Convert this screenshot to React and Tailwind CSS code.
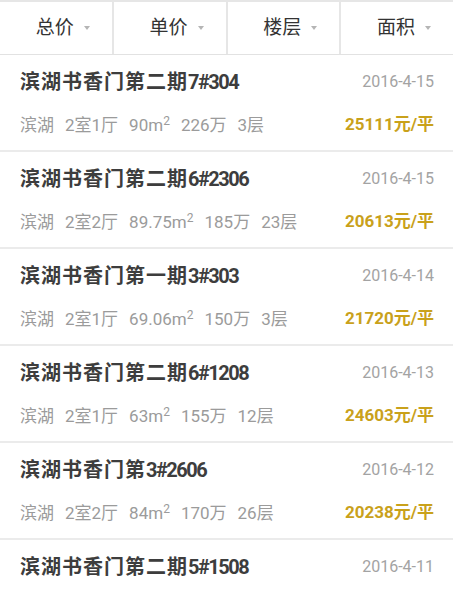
import React from "react";

const tabs = ["总价", "单价", "楼层", "面积"];

const houses = [
  { name: "滨湖书香门第二期", no: "7#304", date: "2016-4-15", area: "滨湖", room: "2室1厅", size: "90", total: "226万", floor: "3层", price: "25111" },
  { name: "滨湖书香门第二期", no: "6#2306", date: "2016-4-15", area: "滨湖", room: "2室2厅", size: "89.75", total: "185万", floor: "23层", price: "20613" },
  { name: "滨湖书香门第一期", no: "3#303", date: "2016-4-14", area: "滨湖", room: "2室1厅", size: "69.06", total: "150万", floor: "3层", price: "21720" },
  { name: "滨湖书香门第二期", no: "6#1208", date: "2016-4-13", area: "滨湖", room: "2室1厅", size: "63", total: "155万", floor: "12层", price: "24603" },
  { name: "滨湖书香门第", no: "3#2606", date: "2016-4-12", area: "滨湖", room: "2室2厅", size: "84", total: "170万", floor: "26层", price: "20238" },
  { name: "滨湖书香门第二期", no: "5#1508", date: "2016-4-11", area: "滨湖", room: "2室1厅", size: "80", total: "160万", floor: "18层", price: "20000" },
];

const App = () => {
  return (
    <div
      className="w-full min-h-screen bg-white"
      style={{ fontFamily: '"Roboto", "Noto Sans CJK SC", sans-serif' }}
    >
      {/* sort tabs */}
      <div className="flex h-[55px] border-t-2 border-b border-t-[#e6e6e6] border-b-[#e2e2e2] bg-white">
        {tabs.map((t, i) => (
          <div
            key={t}
            className={`flex-1 flex items-center justify-center pl-[14px] gap-[10px] ${
              i < 3 ? "border-r-2 border-[#e6e6e6]" : ""
            }`}
          >
            <span className="text-[19px] text-[#333]">{t}</span>
            <span className="w-0 h-0 border-l-[3px] border-r-[3px] border-t-[4px] border-l-transparent border-r-transparent border-t-[#b5b5b5]" />
          </div>
        ))}
      </div>

      {/* list */}
      <div className="flex flex-col">
        {houses.map((h, i) => (
          <div
            key={i}
            className="pt-[15px] pb-[13px] pl-[20px] pr-[19px] border-b-2 border-[#ebebeb]"
          >
            <div className="flex items-center justify-between h-[24px]">
              <p className="text-[20px] font-bold text-[#3d3d3d] leading-[24px]">
                <span className="tracking-[1px]">{h.name}</span>
                <span className="tracking-[-1.5px]">{h.no}</span>
              </p>
              <span className="text-[16px] text-[#a3a3a3]">{h.date}</span>
            </div>
            <div className="flex items-center justify-between h-[24px] mt-[19px]">
              <div className="flex items-center gap-[11px] text-[17px] text-[#9b9b9b] leading-[24px]">
                <span>{h.area}</span>
                <span>{h.room}</span>
                <span>
                  {h.size}m<sup className="text-[12px]">2</sup>
                </span>
                <span>{h.total}</span>
                <span>{h.floor}</span>
              </div>
              <span className="text-[17px] font-bold text-[#c9a11b]">
                {h.price}元/平
              </span>
            </div>
          </div>
        ))}
      </div>
    </div>
  );
};

export default App;
